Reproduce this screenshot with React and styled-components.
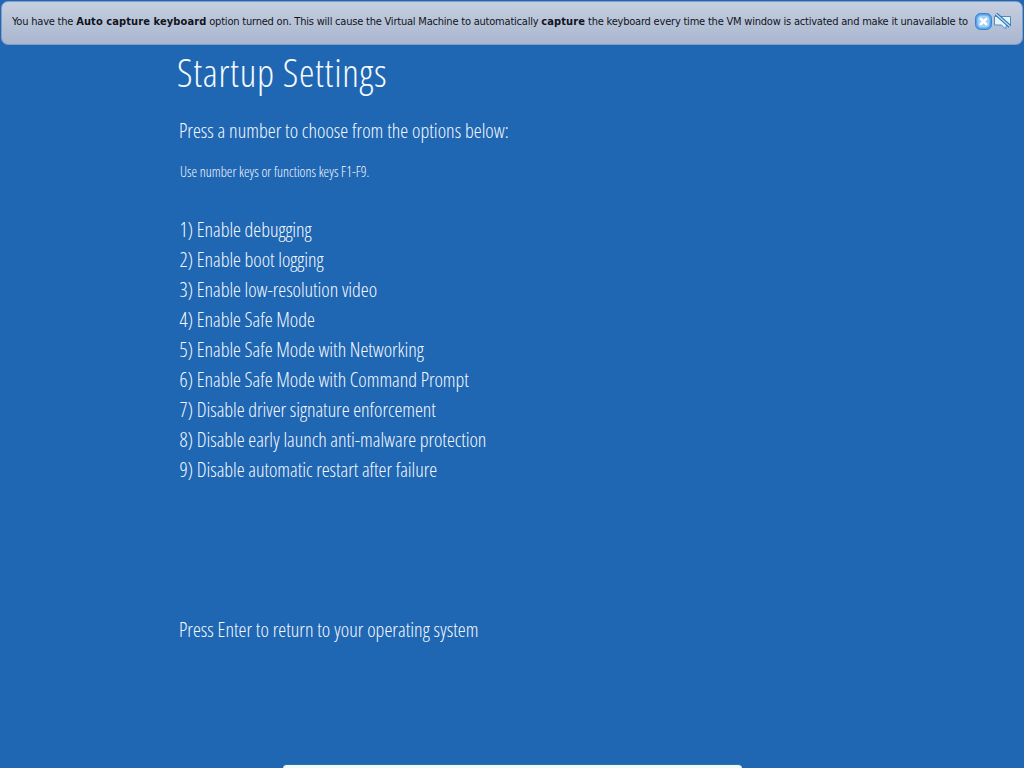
import React from "react";
import styled, { createGlobalStyle } from "styled-components";

const options = [
  "1) Enable debugging",
  "2) Enable boot logging",
  "3) Enable low-resolution video",
  "4) Enable Safe Mode",
  "5) Enable Safe Mode with Networking",
  "6) Enable Safe Mode with Command Prompt",
  "7) Disable driver signature enforcement",
  "8) Disable early launch anti-malware protection",
  "9) Disable automatic restart after failure",
];

const App = () => {
  return (
    <Screen>
      <GlobalStyle />
      <Notice>
        <NoticeText>
          You have the <strong>Auto capture keyboard</strong> option turned on.
          This will cause the Virtual Machine to automatically{" "}
          <strong>capture</strong> the keyboard every time the VM window is
          activated and make it unavailable to
        </NoticeText>
        <NoticeIcons>
          <svg width="17" height="17" viewBox="0 0 17 17">
            <rect x="0.5" y="0.5" width="16" height="16" rx="5" fill="#5aa4ea" stroke="#3b80c8" />
            <rect x="2.5" y="2.5" width="12" height="12" rx="4" fill="#9fd0f6" />
            <path d="M5.8 5.8l5.4 5.4M11.2 5.8l-5.4 5.4" stroke="#fff" strokeWidth="2.6" strokeLinecap="round" />
          </svg>
          <svg width="17" height="17" viewBox="0 0 17 17">
            <path d="M0.5 3.5h16v8.5h-4l-1 4-4-4h-7z" fill="#e6f3fb" stroke="#4c8fc4" />
            <path d="M2 1l14 12.5" stroke="#2f74b8" strokeWidth="3.6" />
            <path d="M2 1l14 12.5" stroke="#b6dcf6" strokeWidth="1.4" />
          </svg>
        </NoticeIcons>
      </Notice>
      <Content>
        <Title>Startup Settings</Title>
        <Lead>Press a number to choose from the options below:</Lead>
        <Hint>Use number keys or functions keys F1-F9.</Hint>
        <OptionList>
          {options.map((option) => (
            <Option key={option}>{option}</Option>
          ))}
        </OptionList>
        <Footer>Press Enter to return to your operating system</Footer>
      </Content>
      <BottomBar />
    </Screen>
  );
};

export default App;

const GlobalStyle = createGlobalStyle`
  html, body {
    margin: 0;
    padding: 0;
    background: #1f66b3;
  }
`;

const Screen = styled.div`
  position: relative;
  width: 1024px;
  height: 768px;
  overflow: hidden;
  background: #1f66b3;
  font-family: "Open Sans", "Liberation Sans", sans-serif;
  font-stretch: 75%;
  font-weight: 300;
  color: #f4f9fe;
`;

const Notice = styled.div`
  position: absolute;
  top: 1px;
  left: 1px;
  width: 1022px;
  height: 44px;
  box-sizing: border-box;
  padding: 0 11px 4px 10px;
  display: flex;
  align-items: center;
  justify-content: space-between;
  border: 1px solid #7f9cc4;
  border-radius: 7px;
  background: linear-gradient(#c6cfe0, #a9b6cf);
  font-family: "DejaVu Sans Condensed", "DejaVu Sans", sans-serif;
  font-stretch: condensed;
  font-weight: 400;
  color: #10141c;
`;

const NoticeText = styled.div`
  font-size: 11px;
  letter-spacing: -0.21px;
  white-space: nowrap;

  strong {
    font-weight: 700;
    letter-spacing: 0.1px;
  }
`;

const NoticeIcons = styled.div`
  display: flex;
  gap: 2px;
`;

const Content = styled.div`
  padding: 46px 0 0 179px;
`;

const Title = styled.h1`
  margin: 0 0 0 -2px;
  font-size: 39px;
  line-height: 52px;
  font-weight: 300;
  letter-spacing: 0.7px;
`;

const Lead = styled.p`
  margin: 18px 0 0;
  font-size: 20px;
  line-height: 30px;
  letter-spacing: 0.04px;
`;

const Hint = styled.p`
  margin: 14px 0 0 1px;
  font-size: 14px;
  line-height: 24px;
  letter-spacing: 0.03px;
`;

const OptionList = styled.ul`
  list-style: none;
  margin: 31px 0 0 0.5px;
  padding: 0;
`;

const Option = styled.li`
  font-size: 20px;
  line-height: 30px;
  letter-spacing: -0.03px;
`;

const Footer = styled.p`
  margin: 130px 0 0;
  font-size: 20px;
  line-height: 30px;
  letter-spacing: 0.04px;
`;

const BottomBar = styled.div`
  position: absolute;
  left: 283px;
  bottom: 0;
  width: 459px;
  height: 4px;
  box-sizing: border-box;
  border-top: 1px solid #2f719f;
  border-radius: 5px 5px 0 0;
  background: #eefbfb;
`;
